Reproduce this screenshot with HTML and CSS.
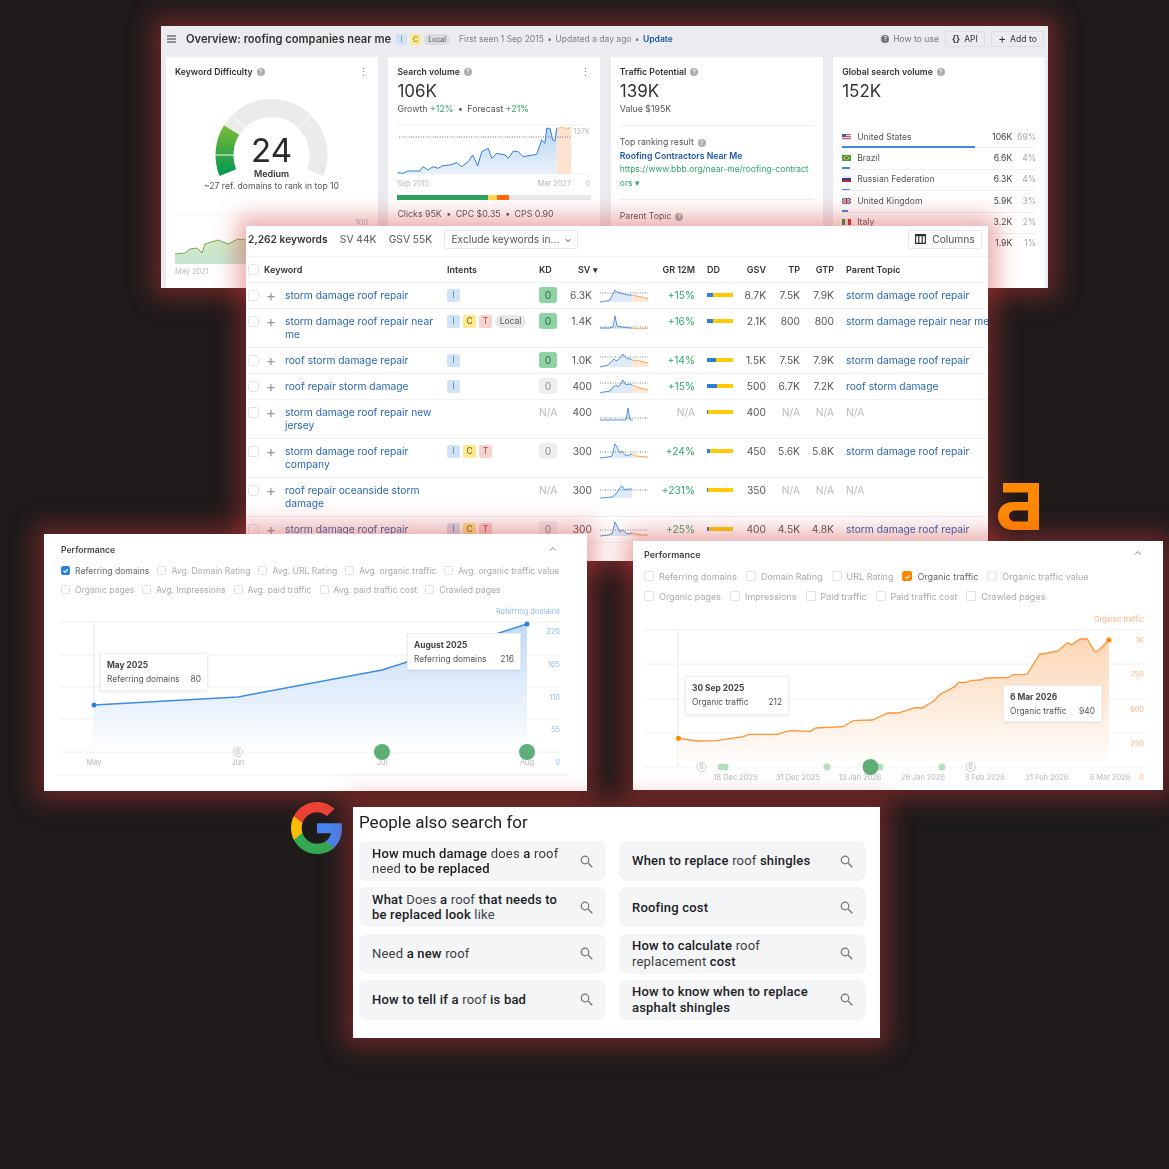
FILE: index.html
```html
<!DOCTYPE html>
<html lang="en">
<head>
  <meta charset="utf-8">
  <title>Roofing keyword research</title>
  <link rel="stylesheet" href="styles.css">
</head>
<body>
<div class="canvas">

  <!-- overview -->
  <section class="shot shot-overview">
    <div class="topbar">
      <svg class="burger" width="9" height="8" viewBox="0 0 9 8"><path d="M0 1h9M0 4h9M0 7h9" stroke="#333" stroke-width="1.2"/></svg>
      <span class="page-title">Overview: roofing companies near me</span>
      <span class="tag tag-i tag-sm">I</span>
      <span class="tag tag-c tag-sm">C</span>
      <span class="tag tag-local tag-sm">Local</span>
      <span class="meta">First seen 1 Sep 2015 <span class="sep-tight">•</span> Updated a day ago <span class="sep-tight">•</span> <a class="update">Update</a></span>
      <span class="topbar-right">
        <span class="help-dark">?</span>
        <span class="howto">How to use</span>
        <span class="tbtn tbtn-api"><b>{}</b> API</span>
        <span class="tbtn tbtn-add"><span class="plus-sign">+</span> Add to</span>
      </span>
    </div>
    <div class="cards">
      <div class="card">
        <div class="card-head"><span class="card-title">Keyword Difficulty</span><span class="help">?</span><span class="dots">⋮</span></div>
        <svg class="gauge" width="212" height="117" viewBox="0 0 212 117">
          <defs>
            <linearGradient id="gaugeGreen" gradientUnits="userSpaceOnUse" x1="0" y1="46" x2="0" y2="93">
              <stop offset="0" stop-color="#7cba38"/>
              <stop offset="1" stop-color="#07994f"/>
            </linearGradient>
          </defs>
          <path d="M65.6 50.1A47 47 0 0 1 72.3 41.8" fill="none" stroke="#e9ebed" stroke-width="18"/>
          <path d="M72.3 41.8A47 47 0 0 1 138.7 41.8" fill="none" stroke="#e9ebed" stroke-width="18"/>
          <path d="M138.7 41.8A47 47 0 0 1 149.1 92.6" fill="none" stroke="#e9ebed" stroke-width="18"/>
          <path d="M61.9 92.6A47 47 0 0 1 65.6 50.1" fill="none" stroke="url(#gaugeGreen)" stroke-width="18"/>
          <path d="M48 75h21M66 35l13 13M145 35l-13 13" stroke="#fff" stroke-width="1"/>
          <text class="gauge-num" x="105.5" y="82" text-anchor="middle">24</text>
          <text class="gauge-label" x="105.5" y="97" text-anchor="middle">Medium</text>
          <text class="gauge-sub" x="105.5" y="109" text-anchor="middle">~27 ref. domains to rank in top 10</text>
        </svg>
        <svg class="mini" width="212" height="74" viewBox="166 214 212 74">
          <defs>
            <linearGradient id="miniFill" x1="0" y1="0" x2="0" y2="1">
              <stop offset="0" stop-color="#d6e8c4"/>
              <stop offset="1" stop-color="#c4e6d6"/>
            </linearGradient>
          </defs>
          <path d="M175 214H369" stroke="#eef0f2"/>
          <path d="M175 254L185 253L190 249L197 248L202 253L205 244L218 240L228 244L238 239L246 240V264H175Z" fill="url(#miniFill)"/>
          <path d="M175 254L185 253L190 249L197 248L202 253L205 244L218 240L228 244L238 239L246 240" fill="none" stroke="#6eb043" stroke-width="1"/>
          <text class="axis" x="362" y="225" text-anchor="middle">100</text>
          <text class="axis" x="175" y="274">May 2021</text>
        </svg>
      </div>

      <div class="card">
        <div class="card-head"><span class="card-title">Search volume</span><span class="help">?</span><span class="dots">⋮</span></div>
        <div class="big-num">106K</div>
        <div class="sub-line">Growth <span class="up">+12%</span> <span class="sep">•</span> Forecast <span class="up">+21%</span></div>
        <svg class="volume" width="212" height="70" viewBox="388 121 212 70">
          <defs>
            <linearGradient id="volFill" x1="0" y1="0" x2="0" y2="1">
              <stop offset="0" stop-color="#b9d5f3"/>
              <stop offset="1" stop-color="#eaf2fb"/>
            </linearGradient>
          </defs>
          <path d="M397 125H590M397 174H590" stroke="#eef0f2"/>
          <path d="M556.7 128L571 127V174H556.7Z" fill="#fde3cf"/>
          <path d="M397.7 172.7L403 173.3L408 171L420 171L423 166.7L428.3 170L433 166.7L438 168.3L443 165.7L450 165L456.7 162.7L461.7 166.7L468.3 161.7L472.7 155L477.7 166L481.7 151.7L488.3 148.3L491.7 158.3L496.7 153.3L505 155L508.3 158.3L513.3 151L518.3 151.7L523.3 156.7L536.7 154.3L541.7 140L545 143.3L546.7 128.3L550 128.3L552.7 140L555 140.7L556.7 128.3V174H397.7Z" fill="url(#volFill)"/>
          <path d="M399 137H571" stroke="#777" stroke-width="1" stroke-dasharray="1 1.4"/>
          <path d="M397.7 172.7L403 173.3L408 171L420 171L423 166.7L428.3 170L433 166.7L438 168.3L443 165.7L450 165L456.7 162.7L461.7 166.7L468.3 161.7L472.7 155L477.7 166L481.7 151.7L488.3 148.3L491.7 158.3L496.7 153.3L505 155L508.3 158.3L513.3 151L518.3 151.7L523.3 156.7L536.7 154.3L541.7 140L545 143.3L546.7 128.3L550 128.3L552.7 140L555 140.7L556.7 128.3" fill="none" stroke="#2f80d8" stroke-width="1"/>
          <path d="M556.7 128.3L562 127L567 129L571 127" fill="none" stroke="#ff8c1a" stroke-width="1" stroke-dasharray="1.4 1.6"/>
          <text class="axis" x="590" y="134" text-anchor="end">137K</text>
          <text class="axis" x="397" y="186">Sep 2015</text>
          <text class="axis" x="571" y="186" text-anchor="end">Mar 2027</text>
          <text class="axis" x="590" y="186" text-anchor="end">0</text>
        </svg>
        <div class="share-bar"><i class="sb-green"></i><i class="sb-yellow"></i><i class="sb-orange"></i></div>
        <div class="sub-line clicks">Clicks 95K <span class="sep">•</span> CPC $0.35 <span class="sep">•</span> CPS 0.90</div>
      </div>

      <div class="card">
        <div class="card-head"><span class="card-title">Traffic Potential</span><span class="help">?</span></div>
        <div class="big-num">139K</div>
        <div class="sub-line">Value $195K</div>
        <div class="rule rule-top"></div>
        <div class="small-head">Top ranking result<span class="help">?</span></div>
        <div class="top-link">Roofing Contractors Near Me</div>
        <div class="top-url">https://www.bbb.org/near-me/roofing-contract<br>ors ▾</div>
        <div class="rule rule-mid"></div>
        <div class="small-head">Parent Topic<span class="help">?</span></div>
        <div class="top-parent">roofing companies</div>
      </div>

      <div class="card">
        <div class="card-head"><span class="card-title">Global search volume</span><span class="help">?</span></div>
        <div class="big-num">152K</div>
        <div class="geo-list">
          <div class="geo-row">
            <div class="geo-main">
              <svg class="flag" viewBox="0 0 9 6"><rect width="9" height="6" fill="#d8dce6"/><path d="M0 .5h9M0 2.5h9M0 4.5h9" stroke="#c9606a"/><rect width="4" height="3" fill="#4a5a92"/></svg>
              <span class="geo-name">United States</span><span class="geo-val">106K</span><span class="geo-pct">69%</span>
            </div>
            <div class="geo-bar" style="width:133px"></div>
          </div>
          <div class="geo-row">
            <div class="geo-main">
              <svg class="flag" viewBox="0 0 9 6"><rect width="9" height="6" fill="#3d9a3f"/><path d="M4.5.7L8 3 4.5 5.3 1 3Z" fill="#f2d23c"/><circle cx="4.5" cy="3" r="1.2" fill="#2c4a8e"/></svg>
              <span class="geo-name">Brazil</span><span class="geo-val">6.6K</span><span class="geo-pct">4%</span>
            </div>
            <div class="geo-bar" style="width:8px"></div>
          </div>
          <div class="geo-row">
            <div class="geo-main">
              <svg class="flag" viewBox="0 0 9 6"><rect width="9" height="2" fill="#e9e9ee"/><rect y="2" width="9" height="2" fill="#2a3f8f"/><rect y="4" width="9" height="2" fill="#c8202f"/></svg>
              <span class="geo-name">Russian Federation</span><span class="geo-val">6.3K</span><span class="geo-pct">4%</span>
            </div>
            <div class="geo-bar" style="width:8px"></div>
          </div>
          <div class="geo-row">
            <div class="geo-main">
              <svg class="flag" viewBox="0 0 9 6"><rect width="9" height="6" fill="#36468c"/><path d="M0 0l9 6M9 0L0 6" stroke="#eee" stroke-width="1"/><path d="M4.5 0v6M0 3h9" stroke="#eee" stroke-width="2"/><path d="M4.5 0v6M0 3h9" stroke="#c8202f" stroke-width="1"/></svg>
              <span class="geo-name">United Kingdom</span><span class="geo-val">5.9K</span><span class="geo-pct">3%</span>
            </div>
            <div class="geo-bar" style="width:6px"></div>
          </div>
          <div class="geo-row">
            <div class="geo-main">
              <svg class="flag" viewBox="0 0 9 6"><rect width="3" height="6" fill="#2f8f46"/><rect x="3" width="3" height="6" fill="#eee"/><rect x="6" width="3" height="6" fill="#cf2b37"/></svg>
              <span class="geo-name">Italy</span><span class="geo-val">3.2K</span><span class="geo-pct">2%</span>
            </div>
            <div class="geo-bar" style="width:4px"></div>
          </div>
          <div class="geo-row">
            <div class="geo-main">
              <span class="flag"></span>
              <span class="geo-name"></span><span class="geo-val">1.9K</span><span class="geo-pct">1%</span>
            </div>
          </div>
        </div>
      </div>
    </div>
  </section>

  <!-- keywords table -->
  <section class="shot shot-table">
    <div class="kw-toolbar">
      <span class="kw-count">2,262 keywords</span>
      <span class="kw-stat">SV 44K</span>
      <span class="kw-stat">GSV 55K</span>
      <span class="kw-filter">Exclude keywords in... <span class="chev">⌄</span></span>
      <span class="kw-columns">
        <svg width="11" height="10" viewBox="0 0 11 10"><path d="M.6.6h9.8v8.8H.6zM3.8.6v8.8M7.2.6v8.8M.6 1.6h9.8" fill="none" stroke="#333" stroke-width="1.2"/></svg>
        Columns
      </span>
    </div>
    <table class="kw-table">
      <colgroup>
        <col class="c-check"><col class="c-plus"><col class="c-kw"><col class="c-int"><col class="c-kd"><col class="c-sv"><col class="c-spark"><col class="c-gr"><col class="c-dd"><col class="c-gsv"><col class="c-tp"><col class="c-gtp"><col class="c-parent">
      </colgroup>
      <thead>
        <tr>
          <th><span class="box"></span></th><th colspan="2" class="kw-head">Keyword</th><th>Intents</th><th>KD</th><th colspan="2" class="sv-head">SV <span class="sort">▾</span></th><th class="num">GR 12M</th><th class="dd-head">DD</th><th class="num">GSV</th><th class="num">TP</th><th class="num">GTP</th><th class="parent">Parent Topic</th>
        </tr>
      </thead>
      <tbody>
        <tr>
          <td><span class="box"></span></td><td class="plus">+</td><td class="kw">storm damage roof repair</td>
          <td><span class="tag tag-i">I</span></td><td><span class="kd kd-green">0</span></td><td class="num">6.3K</td>
          <td class="spark"><svg width="48" height="20" viewBox="0 0 48 20"><path d="M32 9L36 10L42 11L48 13V16H32Z" class="sp-fc"/><path d="M0 16L6 15L10 14L13 8L15 4L17 6L20 7L24 8L28 9L32 9V16H0Z" class="sp-fill"/><path d="M0 7H48" class="sp-dot"/><path d="M0 16L6 15L10 14L13 8L15 4L17 6L20 7L24 8L28 9L32 9" class="sp-line"/><path d="M32 9L36 10L42 11L48 13" class="sp-or"/></svg></td>
          <td class="num up">+15%</td><td class="dd"><div class="dd-bar"><i style="width:6px"></i></div></td><td class="num">8.7K</td><td class="num">7.5K</td><td class="num">7.9K</td><td class="parent kw">storm damage roof repair</td>
        </tr>
        <tr>
          <td><span class="box"></span></td><td class="plus">+</td><td class="kw">storm damage roof repair near me</td>
          <td><span class="tag tag-i">I</span><span class="tag tag-c">C</span><span class="tag tag-t">T</span><span class="tag tag-local">Local</span></td><td><span class="kd kd-green">0</span></td><td class="num">1.4K</td>
          <td class="spark"><svg width="48" height="20" viewBox="0 0 48 20"><path d="M32 16L40 17L48 16V17H32Z" class="sp-fc"/><path d="M0 16L10 16L13 15L15 4L17 14L22 15L30 16L32 16V17H0Z" class="sp-fill"/><path d="M0 15H48" class="sp-dot"/><path d="M0 16L10 16L13 15L15 4L17 14L22 15L30 16L32 16" class="sp-line"/><path d="M32 16L40 17L48 16" class="sp-or"/></svg></td>
          <td class="num up">+16%</td><td class="dd"><div class="dd-bar"><i style="width:6px"></i></div></td><td class="num">2.1K</td><td class="num">800</td><td class="num">800</td><td class="parent kw">storm damage repair near me</td>
        </tr>
        <tr>
          <td><span class="box"></span></td><td class="plus">+</td><td class="kw">roof storm damage repair</td>
          <td><span class="tag tag-i">I</span></td><td><span class="kd kd-green">0</span></td><td class="num">1.0K</td>
          <td class="spark"><svg width="48" height="20" viewBox="0 0 48 20"><path d="M32 9L40 10L48 12V16H32Z" class="sp-fc"/><path d="M0 16L4 15L8 14L11 11L14 8L16 10L18 9L23 3L26 7L30 8L32 9V16H0Z" class="sp-fill"/><path d="M0 6H48" class="sp-dot"/><path d="M0 16L4 15L8 14L11 11L14 8L16 10L18 9L23 3L26 7L30 8L32 9" class="sp-line"/><path d="M32 9L40 10L48 12" class="sp-or"/></svg></td>
          <td class="num up">+14%</td><td class="dd"><div class="dd-bar"><i style="width:9px"></i></div></td><td class="num">1.5K</td><td class="num">7.5K</td><td class="num">7.9K</td><td class="parent kw">storm damage roof repair</td>
        </tr>
        <tr>
          <td><span class="box"></span></td><td class="plus">+</td><td class="kw">roof repair storm damage</td>
          <td><span class="tag tag-i">I</span></td><td><span class="kd kd-grey">0</span></td><td class="num">400</td>
          <td class="spark"><svg width="48" height="20" viewBox="0 0 48 20"><path d="M32 8L40 11L48 13V16H32Z" class="sp-fc"/><path d="M0 16L4 15L10 14L13 10L16 8L18 10L20 8L23 3L26 8L29 7L32 8V16H0Z" class="sp-fill"/><path d="M0 6H48" class="sp-dot"/><path d="M0 16L4 15L10 14L13 10L16 8L18 10L20 8L23 3L26 8L29 7L32 8" class="sp-line"/><path d="M32 8L40 11L48 13" class="sp-or"/></svg></td>
          <td class="num up">+15%</td><td class="dd"><div class="dd-bar"><i style="width:10px"></i></div></td><td class="num">500</td><td class="num">6.7K</td><td class="num">7.2K</td><td class="parent kw">roof storm damage</td>
        </tr>
        <tr>
          <td><span class="box"></span></td><td class="plus">+</td><td class="kw">storm damage roof repair new jersey</td>
          <td></td><td class="na">N/A</td><td class="num">400</td>
          <td class="spark"><svg width="48" height="20" viewBox="0 0 48 20"><path d="M0 17L26 17L28 5L30 17V17Z" class="sp-fill"/><path d="M0 15H48" class="sp-dot"/><path d="M0 17L26 17L28 5L30 17L33 17" class="sp-line"/></svg></td>
          <td class="num na">N/A</td><td class="dd"><div class="dd-bar"><i style="width:1px"></i></div></td><td class="num">400</td><td class="num na">N/A</td><td class="num na">N/A</td><td class="parent na">N/A</td>
        </tr>
        <tr>
          <td><span class="box"></span></td><td class="plus">+</td><td class="kw">storm damage roof repair company</td>
          <td><span class="tag tag-i">I</span><span class="tag tag-c">C</span><span class="tag tag-t">T</span></td><td><span class="kd kd-grey">0</span></td><td class="num">300</td>
          <td class="spark"><svg width="48" height="20" viewBox="0 0 48 20"><path d="M32 12L36 14L48 15V16H32Z" class="sp-fc"/><path d="M0 16L8 15L12 14L15 2L18 7L20 11L22 9L26 14L32 12V16H0Z" class="sp-fill"/><path d="M0 10H48" class="sp-dot"/><path d="M0 16L8 15L12 14L15 2L18 7L20 11L22 9L26 14L32 12" class="sp-line"/><path d="M32 12L36 14L48 15" class="sp-or"/></svg></td>
          <td class="num up">+24%</td><td class="dd"><div class="dd-bar"><i style="width:3px"></i></div></td><td class="num">450</td><td class="num">5.6K</td><td class="num">5.8K</td><td class="parent kw">storm damage roof repair</td>
        </tr>
        <tr>
          <td><span class="box"></span></td><td class="plus">+</td><td class="kw">roof repair oceanside storm damage</td>
          <td></td><td class="na">N/A</td><td class="num">300</td>
          <td class="spark"><svg width="48" height="20" viewBox="0 0 48 20"><path d="M0 17L12 16L16 13L19 8L22 5L25 9L28 8L32 8V17H0Z" class="sp-fill"/><path d="M0 9H48" class="sp-dot"/><path d="M0 17L12 16L16 13L19 8L22 5L25 9L28 8L32 8" class="sp-line"/></svg></td>
          <td class="num up">+231%</td><td class="dd"><div class="dd-bar"><i style="width:1px"></i></div></td><td class="num">350</td><td class="num na">N/A</td><td class="num na">N/A</td><td class="parent na">N/A</td>
        </tr>
        <tr>
          <td><span class="box"></span></td><td class="plus">+</td><td class="kw">storm damage roof repair</td>
          <td><span class="tag tag-i">I</span><span class="tag tag-c">C</span><span class="tag tag-t">T</span></td><td><span class="kd kd-grey">0</span></td><td class="num">300</td>
          <td class="spark"><svg width="48" height="20" viewBox="0 0 48 20"><path d="M32 13L40 15L48 15V16H32Z" class="sp-fc"/><path d="M0 16L8 15L12 14L15 2L18 8L20 12L23 10L27 14L32 13V16H0Z" class="sp-fill"/><path d="M0 10H48" class="sp-dot"/><path d="M0 16L8 15L12 14L15 2L18 8L20 12L23 10L27 14L32 13" class="sp-line"/><path d="M32 13L40 15L48 15" class="sp-or"/></svg></td>
          <td class="num up">+25%</td><td class="dd"><div class="dd-bar"><i style="width:2px"></i></div></td><td class="num">400</td><td class="num">4.5K</td><td class="num">4.8K</td><td class="parent kw">storm damage roof repair</td>
        </tr>
      </tbody>
    </table>
  </section>

  <!-- ahrefs mark -->
  <svg class="logo-a" width="41" height="47" viewBox="0 0 41 47">
    <path fill-rule="evenodd" fill="#ff8800" d="M5 0H41V47H15C6 47 0 41 0 33S6 19 15 19H30V9.5H5ZM30 27.5H17C13.5 27.5 11 30 11 33S13.5 38.500 17 38.500H30Z"/>
  </svg>

  <!-- performance, referring domains -->
  <section class="shot shot-perf-left">
    <div class="perf-head"><span class="perf-title">Performance</span><span class="perf-caret">⌃</span></div>
    <div class="checks">
      <span class="check on-blue"><i>✓</i>Referring domains</span>
      <span class="check"><i></i>Avg. Domain Rating</span>
      <span class="check"><i></i>Avg. URL Rating</span>
      <span class="check"><i></i>Avg. organic traffic</span>
      <span class="check"><i></i>Avg. organic traffic value</span>
    </div>
    <div class="checks">
      <span class="check"><i></i>Organic pages</span>
      <span class="check"><i></i>Avg. Impressions</span>
      <span class="check"><i></i>Avg. paid traffic</span>
      <span class="check"><i></i>Avg. paid traffic cost</span>
      <span class="check"><i></i>Crawled pages</span>
    </div>
    <svg class="chart-left" width="543" height="182" viewBox="44 604 543 182">
      <defs>
        <linearGradient id="blueFill" x1="0" y1="0" x2="0" y2="1">
          <stop offset="0" stop-color="#c2dbf6"/>
          <stop offset="1" stop-color="#ffffff"/>
        </linearGradient>
      </defs>
      <path d="M60 622H560M60 655H560M60 687H560M60 719H560M60 752H560M57 775H568" stroke="#eef0f2"/>
      <path d="M94 622V752" stroke="#e8eaed"/>
      <path d="M94 705L238 697L382 670L527 624V752H94Z" fill="url(#blueFill)"/>
      <path d="M94 705L238 697L382 670L527 624" fill="none" stroke="#3c8ce0" stroke-width="1.4"/>
      <circle cx="94" cy="705" r="2.5" fill="#2f80d8"/>
      <circle cx="527" cy="624" r="2.500" fill="#2f80d8"/>
      <circle cx="238" cy="752" r="4.500" fill="#fff" stroke="#ccc"/>
      <text class="axis-g" x="238" y="754" text-anchor="middle">G</text>
      <text class="axis" x="94" y="765" text-anchor="middle">May</text>
      <text class="axis" x="238" y="765" text-anchor="middle">Jun</text>
      <text class="axis" x="382" y="765" text-anchor="middle">Jul</text>
      <text class="axis" x="527" y="765" text-anchor="middle">Aug</text>
      <circle cx="382" cy="752" r="8" fill="#5fae75"/>
      <circle cx="527" cy="752" r="8" fill="#5fae75"/>
      <text class="axis-blue" x="560" y="614" text-anchor="end">Referring domains</text>
      <text class="axis-blue" x="560" y="634" text-anchor="end">220</text>
      <text class="axis-blue" x="560" y="667" text-anchor="end">165</text>
      <text class="axis-blue" x="560" y="700" text-anchor="end">110</text>
      <text class="axis-blue" x="560" y="732" text-anchor="end">55</text>
      <text class="axis-blue" x="560" y="765" text-anchor="end">0</text>
    </svg>
    <div class="tip tip-may"><b>May 2025</b><div class="tip-row"><span>Referring domains</span><span>80</span></div></div>
    <div class="tip tip-aug"><b>August 2025</b><div class="tip-row"><span>Referring domains</span><span>216</span></div></div>
  </section>

  <!-- performance, organic traffic -->
  <section class="shot shot-perf-right">
    <div class="perf-head"><span class="perf-title">Performance</span><span class="perf-caret">⌃</span></div>
    <div class="checks">
      <span class="check"><i></i>Referring domains</span>
      <span class="check"><i></i>Domain Rating</span>
      <span class="check"><i></i>URL Rating</span>
      <span class="check on-orange"><i>✓</i>Organic traffic</span>
      <span class="check"><i></i>Organic traffic value</span>
    </div>
    <div class="checks">
      <span class="check"><i></i>Organic pages</span>
      <span class="check"><i></i>Impressions</span>
      <span class="check"><i></i>Paid traffic</span>
      <span class="check"><i></i>Paid traffic cost</span>
      <span class="check"><i></i>Crawled pages</span>
    </div>
    <svg class="chart-right" width="530" height="178" viewBox="633 610 530 178">
      <defs>
        <linearGradient id="orangeFill" x1="0" y1="0" x2="0" y2="1">
          <stop offset="0" stop-color="#fcd6b5"/>
          <stop offset="1" stop-color="#ffffff"/>
        </linearGradient>
      </defs>
      <path d="M644 630H1145M644 664H1145M644 699H1145M644 733H1145M644 767H1145" stroke="#eef0f2"/>
      <path d="M678 630V767" stroke="#e8eaed"/>
      <path d="M678.500 738.300L697 741L716 740.700L743.400 736.700L748.600 734.300L777.800 734.300L783 732.300L791.600 730.700L810.500 731.300L815.600 728L843 726.700L853.400 720.700L872.400 720L887.800 713L898 713L915.300 707.700L922.200 708L934.200 700.700L939.400 694.700L954.900 686.700L958.300 682.300L965.200 682.300L972 680.300L980.600 680L985.800 678L1008 677.700L1013.300 674.700L1027 674.300L1039.800 654L1042.500 654L1058 651L1067.300 642.700L1071.700 644.700L1080.300 639L1087.200 639L1095 652L1099.200 650L1108.900 640V767H678.500Z" fill="url(#orangeFill)"/>
      <path d="M678.500 738.300L697 741L716 740.700L743.400 736.700L748.600 734.300L777.800 734.300L783 732.300L791.600 730.700L810.500 731.300L815.600 728L843 726.700L853.400 720.700L872.400 720L887.800 713L898 713L915.300 707.700L922.200 708L934.200 700.700L939.400 694.700L954.900 686.700L958.300 682.300L965.200 682.300L972 680.300L980.600 680L985.800 678L1008 677.700L1013.300 674.700L1027 674.300L1039.800 654L1042.500 654L1058 651L1067.300 642.700L1071.700 644.700L1080.300 639L1087.200 639L1095 652L1099.200 650L1108.900 640" fill="none" stroke="#ff9233" stroke-width="1.300"/>
      <circle cx="678.500" cy="738.300" r="2.500" fill="#ff8800"/>
      <circle cx="1108.900" cy="640" r="2.500" fill="#ff8800"/>
      <text class="axis" x="735.500" y="780" text-anchor="middle">18 Dec 2025</text>
      <text class="axis" x="798" y="780" text-anchor="middle">31 Dec 2025</text>
      <text class="axis" x="860" y="780" text-anchor="middle">13 Jan 2026</text>
      <text class="axis" x="923" y="780" text-anchor="middle">26 Jan 2026</text>
      <text class="axis" x="985" y="780" text-anchor="middle">8 Feb 2026</text>
      <text class="axis" x="1047" y="780" text-anchor="middle">21 Feb 2026</text>
      <text class="axis" x="1110" y="780" text-anchor="middle">6 Mar 2026</text>
      <circle cx="701.500" cy="767" r="4.500" fill="#fff" stroke="#ccc"/>
      <text class="axis-g" x="701.500" y="769" text-anchor="middle">G</text>
      <circle cx="970.600" cy="767" r="4.500" fill="#fff" stroke="#ccc"/>
      <text class="axis-g" x="970.600" y="769" text-anchor="middle">G</text>
      <circle cx="721" cy="767" r="3.500" fill="#b5e0bd"/>
      <circle cx="725" cy="767" r="3.500" fill="#b5e0bd"/>
      <circle cx="827" cy="767" r="3.500" fill="#b5e0bd"/>
      <circle cx="880" cy="767" r="3.500" fill="#b5e0bd"/>
      <circle cx="942" cy="767" r="3.500" fill="#b5e0bd"/>
      <circle cx="870.500" cy="767" r="8" fill="#5fae75"/>
      <text class="axis-orange" x="1144" y="622" text-anchor="end">Organic traffic</text>
      <text class="axis-orange" x="1144" y="643" text-anchor="end">1K</text>
      <text class="axis-orange" x="1144" y="677" text-anchor="end">750</text>
      <text class="axis-orange" x="1144" y="712" text-anchor="end">500</text>
      <text class="axis-orange" x="1144" y="746" text-anchor="end">250</text>
      <text class="axis-orange" x="1144" y="780" text-anchor="end">0</text>
    </svg>
    <div class="tip tip-sep"><b>30 Sep 2025</b><div class="tip-row"><span>Organic traffic</span><span>212</span></div></div>
    <div class="tip tip-mar"><b>6 Mar 2026</b><div class="tip-row"><span>Organic traffic</span><span>940</span></div></div>
  </section>

  <!-- google mark -->
  <svg class="logo-g" width="52" height="52" viewBox="2 2 44 44">
    <path fill="#4285F4" d="M45.120 24.500c0-1.560-.140-3.060-.400-4.500H24v8.510h11.840c-.510 2.750-2.060 5.080-4.390 6.640v5.520h7.110c4.160-3.830 6.560-9.470 6.560-16.170z"/>
    <path fill="#34A853" d="M24 46c5.940 0 10.920-1.970 14.560-5.330l-7.110-5.520c-1.970 1.320-4.490 2.100-7.450 2.100-5.730 0-10.580-3.870-12.310-9.070H4.340v5.700C7.960 41.070 15.400 46 24 46z"/>
    <path fill="#FBBC05" d="M11.690 28.180C11.250 26.860 11 25.450 11 24s.250-2.860.690-4.180v-5.700H4.340C2.850 17.090 2 20.450 2 24c0 3.550.850 6.910 2.340 9.880l7.350-5.700z"/>
    <path fill="#EA4335" d="M24 10.750c3.230 0 6.130 1.110 8.410 3.290l6.310-6.310C34.910 4.180 29.930 2 24 2 15.400 2 7.960 6.930 4.340 14.120l7.350 5.700c1.730-5.200 6.580-9.070 12.310-9.070z"/>
  </svg>

  <!-- people also search for -->
  <section class="shot shot-google">
    <h2 class="pasf-title">People also search for</h2>
    <div class="pasf-grid">
      <div class="chip"><span><b>How much damage</b> does <b>a</b> roof need <b>to be replaced</b></span><svg class="mag" width="13" height="13" viewBox="0 0 13 13"><circle cx="5" cy="5" r="3.800" fill="none" stroke="#70757a" stroke-width="1.200"/><path d="M8 8l4.300 4.300" stroke="#70757a" stroke-width="1.300"/></svg></div>
      <div class="chip"><span><b>When to replace</b> roof <b>shingles</b></span><svg class="mag" width="13" height="13" viewBox="0 0 13 13"><circle cx="5" cy="5" r="3.800" fill="none" stroke="#70757a" stroke-width="1.200"/><path d="M8 8l4.300 4.300" stroke="#70757a" stroke-width="1.300"/></svg></div>
      <div class="chip"><span><b>What</b> Does <b>a</b> roof <b>that needs to be replaced look</b> like</span><svg class="mag" width="13" height="13" viewBox="0 0 13 13"><circle cx="5" cy="5" r="3.800" fill="none" stroke="#70757a" stroke-width="1.200"/><path d="M8 8l4.300 4.300" stroke="#70757a" stroke-width="1.300"/></svg></div>
      <div class="chip"><span><b>Roofing cost</b></span><svg class="mag" width="13" height="13" viewBox="0 0 13 13"><circle cx="5" cy="5" r="3.800" fill="none" stroke="#70757a" stroke-width="1.200"/><path d="M8 8l4.300 4.300" stroke="#70757a" stroke-width="1.300"/></svg></div>
      <div class="chip"><span>Need <b>a new</b> roof</span><svg class="mag" width="13" height="13" viewBox="0 0 13 13"><circle cx="5" cy="5" r="3.800" fill="none" stroke="#70757a" stroke-width="1.200"/><path d="M8 8l4.300 4.300" stroke="#70757a" stroke-width="1.300"/></svg></div>
      <div class="chip"><span><b>How to calculate</b> roof<br>replacement <b>cost</b></span><svg class="mag" width="13" height="13" viewBox="0 0 13 13"><circle cx="5" cy="5" r="3.800" fill="none" stroke="#70757a" stroke-width="1.200"/><path d="M8 8l4.300 4.300" stroke="#70757a" stroke-width="1.300"/></svg></div>
      <div class="chip"><span><b>How to tell if a</b> roof <b>is bad</b></span><svg class="mag" width="13" height="13" viewBox="0 0 13 13"><circle cx="5" cy="5" r="3.800" fill="none" stroke="#70757a" stroke-width="1.200"/><path d="M8 8l4.300 4.300" stroke="#70757a" stroke-width="1.300"/></svg></div>
      <div class="chip"><span><b>How to know when to replace asphalt shingles</b></span><svg class="mag" width="13" height="13" viewBox="0 0 13 13"><circle cx="5" cy="5" r="3.800" fill="none" stroke="#70757a" stroke-width="1.200"/><path d="M8 8l4.300 4.300" stroke="#70757a" stroke-width="1.300"/></svg></div>
    </div>
  </section>

</div>
</body>
</html>
```

FILE: styles.css
```css
* {
  box-sizing: border-box;
}
html, body {
  margin: 0;
  padding: 0;
  background: #1f1b1b;
}
body {
  font-family: Inter, "Liberation Sans", sans-serif;
  color: #333;
}
.canvas {
  position: relative;
  width: 1169px;
  height: 1169px;
  overflow: hidden;
}

/* the pasted screenshots sit on a free canvas */
.shot {
  position: absolute;
  background: #fff;
  overflow: hidden;
  box-shadow: 0 0 22px 9px rgba(205, 55, 55, 0.42);
  filter: blur(0.4px);
}
.shot-overview {
  left: 161px;
  top: 26px;
  width: 887px;
  height: 262px;
  background: #eaecef;
}
.shot-table {
  left: 246px;
  top: 226px;
  width: 742px;
  height: 335px;
}
.shot-perf-left {
  left: 44px;
  top: 534px;
  width: 543px;
  height: 257px;
  padding: 10px 17px 0;
  filter: blur(0.75px);
}
.shot-perf-right {
  left: 633px;
  top: 541px;
  width: 530px;
  height: 249px;
  padding: 6px 11px 0;
  filter: blur(0.5px);
}
.shot-google {
  left: 353px;
  top: 807px;
  width: 527px;
  height: 231px;
  padding: 5px 14px 0 6px;
}
.logo-a {
  position: absolute;
  left: 998px;
  top: 483px;
}
.logo-g {
  position: absolute;
  left: 291px;
  top: 802px;
}
.sep {
  margin: 0 2px;
}
.sep-tight {
  margin: 0 1px;
}

/* overview top bar */
.topbar {
  display: flex;
  align-items: center;
  height: 26px;
  margin-bottom: 5px;
  padding: 0 4px 0 6px;
  font-size: 9px;
}
.burger {
  margin-right: 10px;
}
.page-title {
  font-size: 11.15px;
  font-weight: 600;
  margin-right: 5px;
}
.tag {
  display: inline-flex;
  align-items: center;
  justify-content: center;
  width: 13px;
  height: 13px;
  margin-right: 3px;
  border-radius: 2px;
  font-size: 8.5px;
  vertical-align: top;
}
.tag-sm {
  width: 11px;
  height: 11px;
  font-size: 7px;
  margin-right: 3px;
}
.tag-i {
  background: #cfe3f6;
  color: #5d7f9f;
}
.tag-c {
  background: #fce88e;
  color: #6b5d1e;
}
.tag-t {
  background: #f9d2cd;
  color: #8a5a55;
}
.tag-local {
  width: 31px;
  margin-left: 0;
  border-radius: 7px;
  background: #e6e8ea;
  color: #555;
}
.tag-local.tag-sm {
  width: 26px;
  background: #d9dbde;
}
.meta {
  margin-left: 6px;
  color: #7b7f85;
  font-size: 8.5px;
}
.update {
  color: #1a57a8;
  font-weight: 600;
}
.topbar-right {
  display: flex;
  align-items: center;
  margin-left: auto;
  margin-top: -1px;
  font-size: 8.6px;
  color: #777;
}
.help-dark {
  width: 8px;
  height: 8px;
  border-radius: 50%;
  background: #6f7378;
  color: #fff;
  font-size: 6px;
  line-height: 8px;
  text-align: center;
  margin-right: 4px;
}
.howto {
  margin-right: 6px;
}
.tbtn {
  display: flex;
  align-items: center;
  justify-content: center;
  height: 16px;
  border: 1px solid #dcdfe2;
  border-radius: 2px;
  color: #333;
}
.tbtn b {
  margin-right: 4px;
}
.tbtn-api {
  width: 40px;
  margin-right: 6px;
}
.tbtn-add {
  width: 53px;
}
.plus-sign {
  font-size: 12px;
  margin-right: 4px;
  line-height: 12px;
}

/* overview cards */
.cards {
  display: grid;
  grid-template-columns: repeat(4, 212px);
  column-gap: 10.4px;
  padding-left: 5px;
}
.card {
  position: relative;
  height: 231px;
  background: #fff;
  padding: 9px 9px 0;
  overflow: hidden;
}
.card-head {
  display: flex;
  align-items: center;
  height: 12px;
}
.card-title {
  font-size: 8.7px;
  font-weight: 600;
}
.help {
  display: inline-block;
  width: 8px;
  height: 8px;
  margin-left: 4px;
  border-radius: 50%;
  background: #a9adb2;
  color: #fff;
  font-size: 6px;
  line-height: 8px;
  text-align: center;
  vertical-align: 0;
}
.dots {
  margin-left: auto;
  font-size: 11px;
  color: #777;
}
.gauge {
  display: block;
  margin: 2px -9px 0;
}
.gauge-num {
  font-size: 33px;
  fill: #2b2b2b;
}
.gauge-label {
  font-size: 9px;
  font-weight: 600;
  fill: #333;
}
.gauge-sub {
  font-size: 8.6px;
  fill: #555;
}
.mini {
  display: block;
  margin: 17px -9px 0;
}
.axis {
  font-size: 7.4px;
  fill: #b5b8bc;
}
.axis-blue {
  font-size: 7.4px;
  fill: #8fbcec;
}
.axis-orange {
  font-size: 7.4px;
  fill: #f9b57f;
}
.axis-g {
  font-size: 5.5px;
  fill: #999;
}
.big-num {
  font-size: 17px;
  line-height: 20px;
  margin-top: 3px;
  color: #333;
}
.sub-line {
  font-size: 8.8px;
  line-height: 12px;
  margin-top: 2px;
  color: #555;
}
.up {
  color: #2fa866;
}
.volume {
  display: block;
  margin: 6px -9px 0;
}
.share-bar {
  display: flex;
  height: 5px;
  margin-top: 4px;
  background: #e9ebed;
}
.share-bar i {
  display: block;
}
.sb-green {
  width: 91px;
  background: #2aa35f;
}
.sb-yellow {
  width: 9px;
  background: #fdd94f;
}
.sb-orange {
  width: 12px;
  background: #ff6a13;
}
.clicks {
  margin-top: 8px;
}
.rule {
  height: 1px;
  background: #eef0f2;
}
.rule-top {
  margin-top: 10px;
}
.rule-mid {
  margin-top: 9px;
}
.small-head {
  font-size: 8.7px;
  line-height: 12px;
  margin-top: 10px;
  color: #555;
}
.top-link {
  font-size: 8.7px;
  line-height: 12px;
  margin-top: 2px;
  font-weight: 600;
  color: #1a57a8;
}
.top-url {
  font-size: 8.5px;
  line-height: 13.500px;
  margin-top: 1px;
  color: #2fa866;
  white-space: nowrap;
}
.top-parent {
  font-size: 9px;
  line-height: 12px;
  margin-top: 3px;
  color: #1a57a8;
}
.geo-list {
  margin-top: 26px;
}
.geo-row {
  height: 21.4px;
  border-bottom: 1px solid #eef0f2;
}
.geo-row:last-child {
  border-bottom: none;
}
.geo-main {
  display: flex;
  align-items: center;
  height: 19px;
  font-size: 8.6px;
  color: #555;
}
.geo-bar {
  height: 1.5px;
  background: #3d8be0;
}
.flag {
  display: block;
  width: 9px;
  height: 6px;
  margin-right: 6px;
  flex: none;
}
.geo-name {
  flex: 1;
}
.geo-val {
  width: 30px;
  text-align: right;
  color: #444;
}
.geo-pct {
  width: 24px;
  text-align: right;
  color: #aaa;
}

/* keywords */
.kw-toolbar {
  display: flex;
  align-items: center;
  height: 31px;
  padding: 0 0 4px 2px;
  border-bottom: 1px solid #f0f1f3;
  font-size: 10.25px;
  color: #555;
}
.kw-count {
  font-weight: 600;
  color: #333;
  margin-right: 12.2px;
}
.kw-stat {
  margin-right: 12.2px;
}
.kw-filter {
  display: flex;
  align-items: center;
  justify-content: center;
  width: 134px;
  height: 19px;
  border: 1px solid #e6e8ea;
  border-radius: 2px;
}
.chev {
  margin-left: 5px;
  font-size: 9px;
  line-height: 6px;
}
.kw-columns {
  display: flex;
  align-items: center;
  justify-content: center;
  gap: 6px;
  width: 74px;
  height: 19px;
  margin: 0 6px 0 auto;
  border: 1px solid #e6e8ea;
  border-radius: 2px;
}
.kw-table {
  width: 742px;
  table-layout: fixed;
  border-collapse: separate;
  border-spacing: 0;
  font-size: 10.25px;
  line-height: 13px;
}
.c-check { width: 19px; }
.c-plus { width: 20px; }
.c-kw { width: 162px; }
.c-int { width: 92px; }
.c-kd { width: 21px; }
.c-sv { width: 32px; }
.c-spark { width: 56px; }
.c-gr { width: 47px; }
.c-dd { width: 38px; }
.c-gsv { width: 33px; }
.c-tp { width: 34px; }
.c-gtp { width: 34px; }
.c-parent { width: 154px; }
th, td {
  padding: 6px 0;
  border-bottom: 1px solid #f0f1f3;
  text-align: left;
  vertical-align: top;
  font-weight: 400;
}
th {
  font-size: 9px;
  font-weight: 600;
  color: #333;
}
td {
  color: #555;
}
td:first-child, th:first-child {
  padding-left: 2px;
}
.kw-head {
  text-indent: -1px;
}
.box {
  display: block;
  width: 11px;
  height: 11px;
  margin-top: 1px;
  border: 1px solid #e2e4e7;
  border-radius: 3px;
}
.plus {
  font-size: 15px;
  color: #999;
  padding-left: 1px;
}
.kw {
  color: #2a66b5;
  padding-right: 6px;
}
.num {
  text-align: right;
}
.sv-head {
  padding-left: 18px;
}
.sort {
  font-size: 9px;
}
.dd-head {
  padding-left: 12px;
}
.na {
  color: #bbb;
}
.parent {
  padding-left: 12px;
  white-space: nowrap;
}
.kd {
  display: block;
  width: 18px;
  height: 16px;
  margin: -2px 0 -1px;
  border-radius: 3px;
  text-align: center;
  line-height: 16px;
}
.kd-green {
  background: #8ed2a6;
  color: #2d6b47;
}
.kd-grey {
  background: #eeeff1;
  color: #8a8d91;
}
.spark {
  padding-left: 8px;
}
.spark svg {
  display: block;
  margin: -3px 0 -4px;
}
.sp-fill {
  fill: #dfeaf8;
}
.sp-fc {
  fill: #fde8d6;
}
.sp-line {
  fill: none;
  stroke: #3d8be0;
  stroke-width: 0.9;
}
.sp-or {
  fill: none;
  stroke: #ff9a4d;
  stroke-width: 0.9;
}
.sp-dot {
  fill: none;
  stroke: #666;
  stroke-width: 0.8;
  stroke-dasharray: 1 1.5;
}
.dd {
  padding-left: 12px;
}
.dd-bar {
  width: 26px;
  height: 4px;
  margin-top: 4px;
  background: #ffcb05;
}
.dd-bar i {
  display: block;
  height: 4px;
  background: #2d7fd3;
}

/* performance panels */
.perf-head {
  display: flex;
  justify-content: space-between;
  align-items: center;
  height: 12px;
  font-size: 8.6px;
}
.perf-title {
  font-weight: 600;
  color: #444;
}
.perf-caret {
  color: #999;
  font-size: 11px;
  line-height: 12px;
  margin-top: 2px;
  margin-right: 13px;
}
.checks {
  display: flex;
  gap: 8px;
  height: 19px;
  align-items: center;
  font-size: 8.6px;
  color: #aaa;
  white-space: nowrap;
}
.perf-head + .checks {
  margin-top: 5px;
}
.check {
  display: flex;
  align-items: center;
}
.check i {
  display: flex;
  align-items: center;
  justify-content: center;
  width: 9px;
  height: 9px;
  margin-right: 5px;
  border: 1px solid #e0e2e5;
  border-radius: 2px;
  color: #fff;
  font-size: 7px;
  font-style: normal;
  font-weight: 700;
}
.on-blue, .on-orange {
  color: #666;
}
.on-blue i {
  background: #2f80d8;
  border-color: #2f80d8;
}
.on-orange i {
  background: #ff8800;
  border-color: #ff8800;
}
.shot-perf-right .perf-head {
  height: 14px;
  font-size: 9px;
}
.shot-perf-right .perf-caret {
  margin-right: 10px;
}
.shot-perf-right .checks {
  height: 20px;
  font-size: 9px;
  gap: 9px;
}
.shot-perf-right .perf-head + .checks {
  margin-top: 5px;
}
.shot-perf-right .check i {
  width: 10px;
  height: 10px;
  margin-right: 5px;
}
.chart-left,
.chart-right {
  position: absolute;
  left: 0;
  bottom: 0;
  display: block;
}
.chart-left {
  bottom: 5px;
}
.chart-right {
  bottom: 2px;
}
.tip {
  position: absolute;
  padding: 5px 6px 4px;
  background: #fff;
  border: 1px solid #eceef0;
  box-shadow: 0 1px 3px rgba(0, 0, 0, 0.08);
  font-size: 8.4px;
  color: #555;
}
.tip b {
  display: block;
  color: #444;
  line-height: 12px;
}
.tip-row {
  display: flex;
  justify-content: space-between;
  line-height: 12px;
  margin-top: 2px;
}
.tip-may {
  left: 56px;
  top: 119px;
  width: 108px;
  height: 38px;
}
.tip-aug {
  left: 363px;
  top: 99px;
  width: 114px;
  height: 37px;
}
.tip-sep {
  left: 52px;
  top: 135px;
  width: 104px;
  height: 39px;
}
.tip-mar {
  left: 370px;
  top: 144px;
  width: 99px;
  height: 37px;
}

/* people also search for */
.pasf-title {
  margin: 0;
  font-family: Roboto, "Liberation Sans", sans-serif;
  font-size: 17px;
  line-height: 20px;
  font-weight: 400;
  color: #222;
}
.pasf-grid {
  display: grid;
  grid-template-columns: 247px 247px;
  grid-auto-rows: 40px;
  column-gap: 13px;
  row-gap: 6.3px;
  margin-top: 9px;
}
.chip {
  display: flex;
  align-items: center;
  justify-content: space-between;
  padding: 0 13px;
  background: #f4f5f7;
  border-radius: 8px;
  font-family: Roboto, "Liberation Sans", sans-serif;
  font-size: 13px;
  letter-spacing: 0.2px;
  line-height: 15.5px;
  color: #3c4043;
}
.chip span {
  width: 195px;
}
.chip b {
  font-weight: 500;
  color: #202124;
}
.mag {
  flex: none;
}
```
